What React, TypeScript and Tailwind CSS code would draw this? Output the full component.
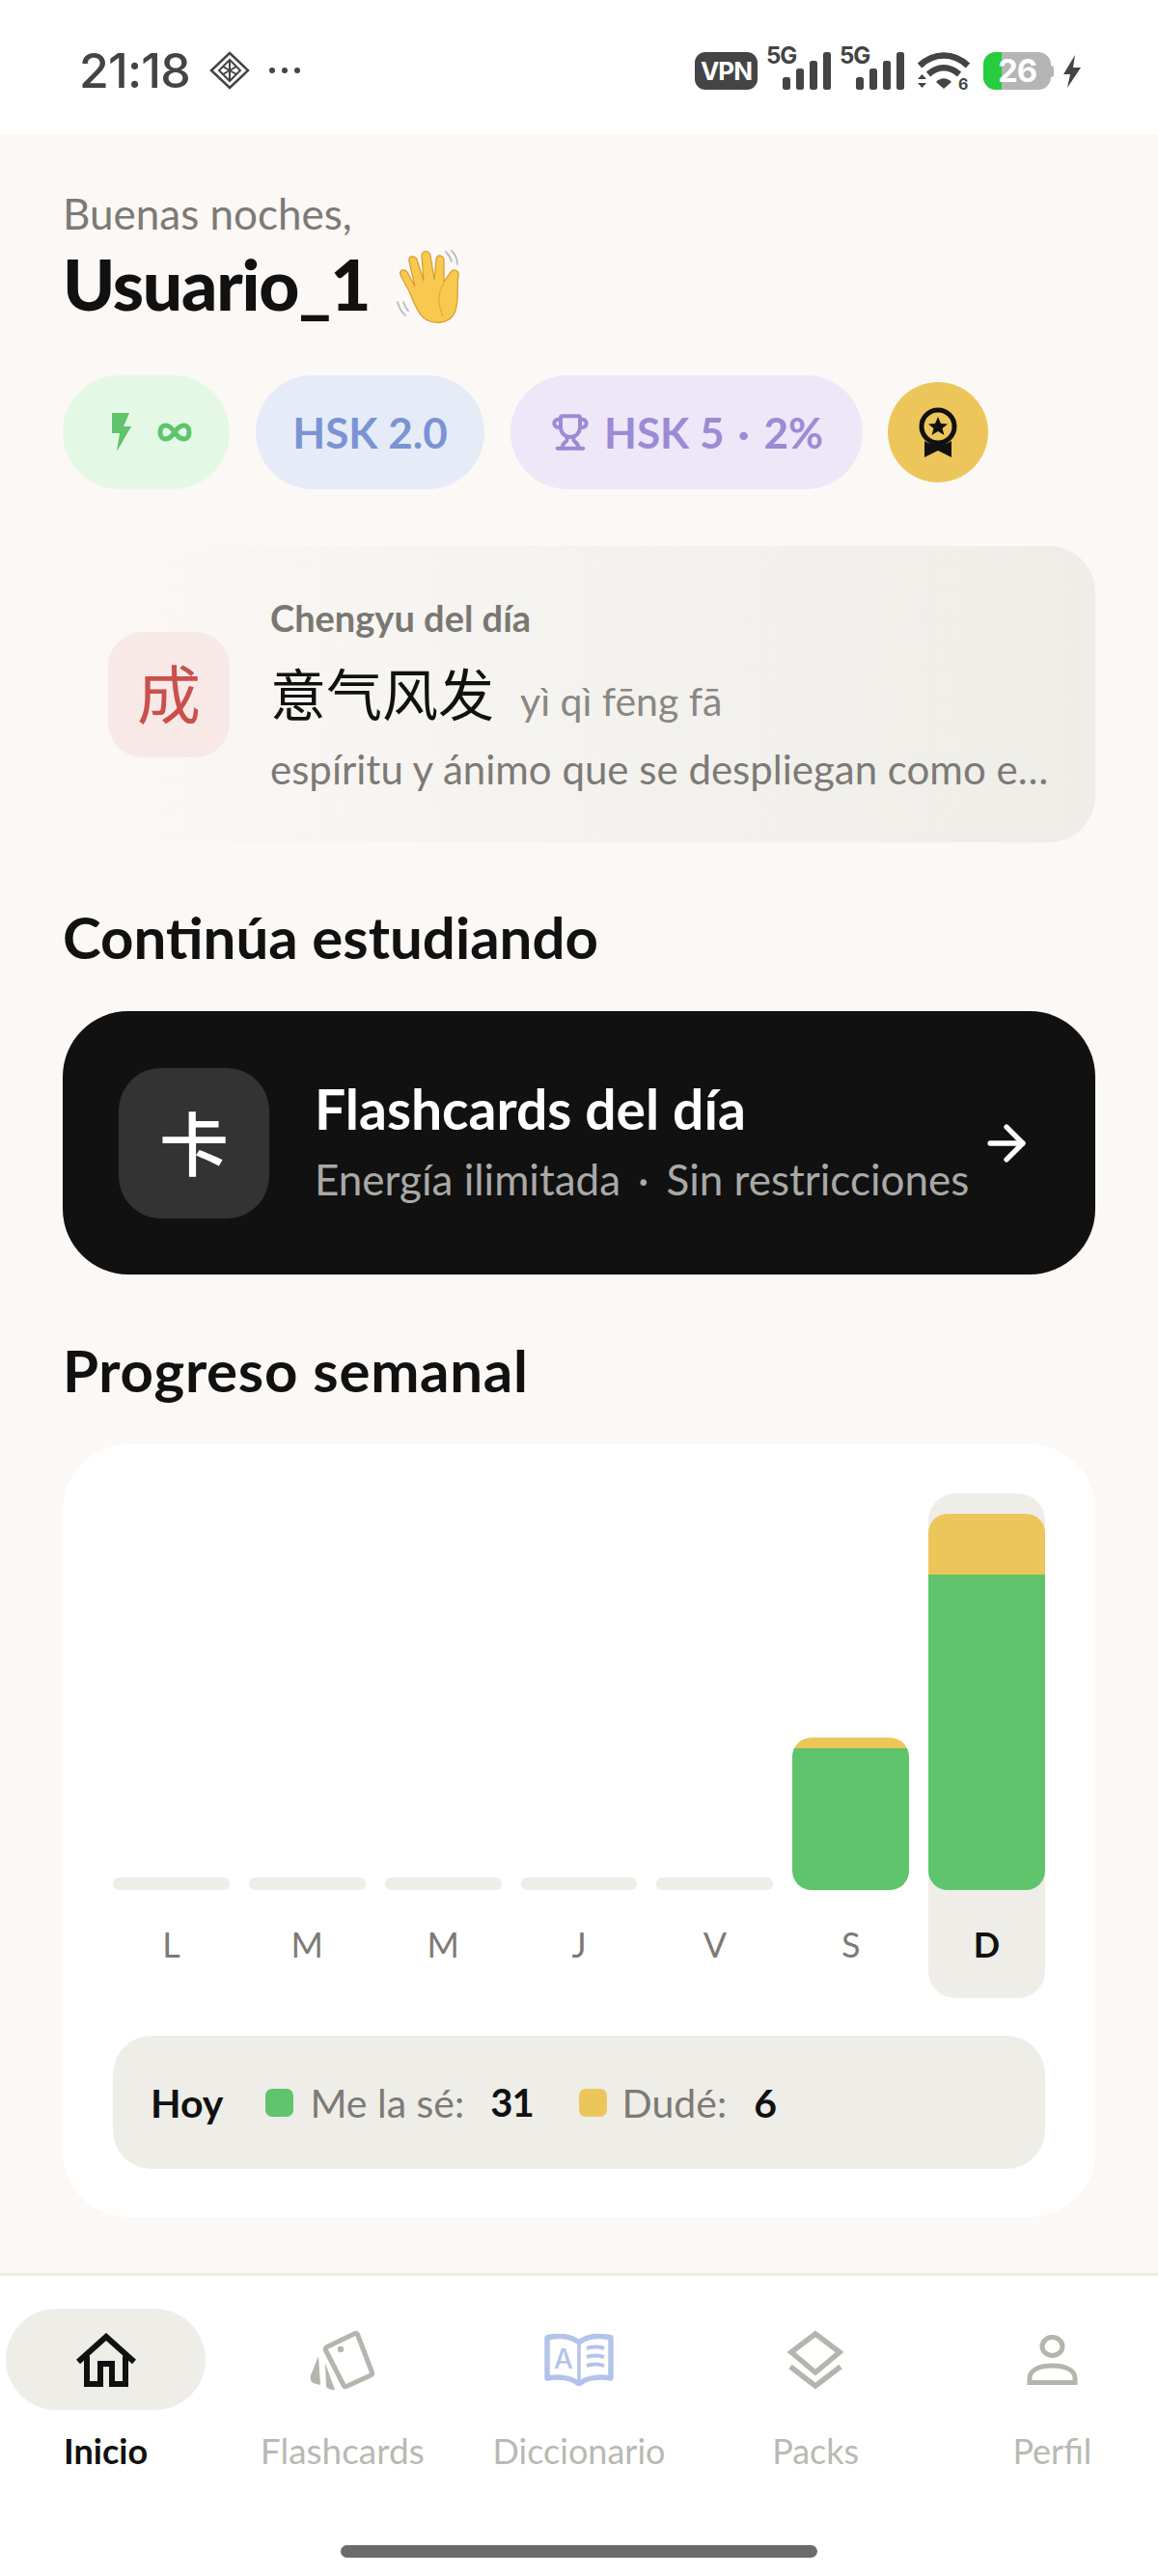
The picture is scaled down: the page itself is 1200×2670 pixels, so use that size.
import { ArrowRight, Trophy } from "lucide-react";

const sans = "font-['Lato','Noto_Sans_CJK_SC',sans-serif]";

function Signal() {
  return (
    <svg width="68" height="54" viewBox="0 -10 68 54" className="block">
      <text x="0" y="17" fontSize="24" fontWeight="700" fill="#444" fontFamily="Inter, sans-serif" letterSpacing="-1">5G</text>
      <rect x="17" y="31" width="8" height="13" rx="2.5" fill="#444" />
      <rect x="31" y="22" width="8" height="22" rx="2.5" fill="#444" />
      <rect x="45" y="14" width="8" height="30" rx="2.5" fill="#444" />
      <rect x="59" y="5" width="8" height="39" rx="2.5" fill="#444" />
    </svg>
  );
}

function StatusBar() {
  return (
    <div className="h-[140px] bg-white flex items-center justify-between pl-[82px] pr-[79px] text-[#444]">
      <div className="flex items-center pt-[6px]">
        <span className="font-['Inter',sans-serif] text-[50px] leading-none font-medium tracking-[-0.8px]">21:18</span>
        <svg width="42" height="40" viewBox="0 0 42 40" fill="none" stroke="#444" strokeWidth="2.5" className="ml-[20px]">
          <path d="M21 2 L40 20 L21 38 L2 20 Z" />
          <path d="M21 9 L32 20 L21 31 L10 20 Z" strokeWidth="2" />
          <path d="M14 16 L28 24 M28 16 L14 24 M21 9 V31" strokeWidth="2" />
        </svg>
        <div className="flex gap-[7px] ml-[20px]">
          <div className="w-[6px] h-[6px] rounded-full bg-[#444]" />
          <div className="w-[6px] h-[6px] rounded-full bg-[#444]" />
          <div className="w-[6px] h-[6px] rounded-full bg-[#444]" />
        </div>
      </div>
      <div className="flex items-end h-[44px] mt-[2px]">
        <div className="w-[65px] h-[39px] rounded-[11px] bg-[#444] text-white font-['Inter',sans-serif] font-bold text-[26px] leading-none flex items-center justify-center tracking-[-1px]">VPN</div>
        <div className="ml-[9px]"><Signal /></div>
        <div className="ml-[8px]"><Signal /></div>
        <svg width="56" height="46" viewBox="0 0 56 46" className="ml-[12px] mb-[-6px]">
          <path d="M3 15 C18 1 38 1 53 15" fill="none" stroke="#444" strokeWidth="6.5" />
          <path d="M12 24 C22 15 34 15 44 24" fill="none" stroke="#444" strokeWidth="6.5" />
          <path d="M20 32 C25 27 31 27 36 32 L28 39 Z" fill="#444" />
          <path d="M1 29 L5.5 24 L10 29 Z M1 33 H10 L5.5 38 Z" fill="#444" />
          <text x="43" y="40" fontSize="16" fontWeight="700" fill="#444" fontFamily="Inter, sans-serif">6</text>
        </svg>
        <div className="flex items-center ml-[13px]">
          <div className="relative w-[70px] h-[39px] rounded-[13px] bg-[#b5b5b5] overflow-hidden flex items-center justify-center">
            <div className="absolute left-0 top-0 bottom-0 w-[19px] bg-[#27cc3f]" />
            <span className="relative text-white font-['Inter',sans-serif] font-bold text-[33px] leading-none tracking-[-1px]">26</span>
          </div>
          <div className="w-[3px] h-[12px] rounded-r-sm bg-[#b5b5b5]" />
        </div>
        <svg width="20" height="34" viewBox="0 0 20 34" className="ml-[9px] mb-[2px]">
          <path d="M13 0 L1 20 H8 L5 34 L19 13 H11 Z" fill="#444" />
        </svg>
      </div>
    </div>
  );
}

function WaveHand() {
  return (
    <svg width="70" height="78" viewBox="0 0 70 78">
      <path d="M58 2 C62 6 64 11 64 16 M52 3 C55 6 57 9 58 13" fill="none" stroke="#b7bfc9" strokeWidth="1.8" strokeLinecap="round" />
      <path d="M2 55 C3 60 6 65 10 69 M8 55 C9 58 10 61 13 64" fill="none" stroke="#b7bfc9" strokeWidth="1.8" strokeLinecap="round" />
      <path
        d="M14 44 L5 27 C3 22 9 20 12 24 L20 39 L14 13 C13 7 20 6 22 11 L29 33 L27 7 C27 1 35 1 36 7 L40 32 L42 11 C43 5 50 6 50 12 L50 34 L57 24 C60 20 66 22 65 28 C63 38 66 52 62 64 C58 76 44 79 33 74 C24 70 19 56 14 44 Z"
        fill="#f7c94f"
        stroke="#d99a2b"
        strokeWidth="1.2"
      />
      <path d="M50 36 C44 44 43 56 49 70" fill="none" stroke="#e5a935" strokeWidth="1.2" />
    </svg>
  );
}

function Pills() {
  return (
    <div className="flex items-center mt-[53px] text-[44px] font-bold leading-none">
      <div className="w-[173px] h-[118px] rounded-full bg-[#e3f9e6] flex items-center pl-[49px]">
        <svg width="22" height="40" viewBox="0 0 22 40">
          <path d="M2 0 H20 L14 14 H22 L7 40 L10 21 H2 Z" fill="#5fc46b" />
        </svg>
        <svg width="36" height="20" viewBox="0 0 36 20" fill="none" stroke="#5fc46b" strokeWidth="5" className="ml-[27px]">
          <path d="M18 10 C14 4 11 3 8.5 3 C5 3 3 6 3 10 C3 14 5 17 8.5 17 C11 17 14 16 18 10 C22 4 25 3 27.5 3 C31 3 33 6 33 10 C33 14 31 17 27.5 17 C25 17 22 16 18 10 Z" />
        </svg>
      </div>
      <div className="ml-[27px] w-[237px] h-[118px] rounded-full bg-[#e5ecf8] text-[#7b93d4] flex items-center justify-center">HSK 2.0</div>
      <div className="ml-[27px] w-[365px] h-[118px] rounded-full bg-[#eee7f8] text-[#9b8bd4] flex items-center pl-[42px]">
        <Trophy size={40} strokeWidth={2.4} />
        <span className="ml-[15px]">HSK 5</span>
        <span className="ml-[14px]">·</span>
        <span className="ml-[15px]">2%</span>
      </div>
      <div className="ml-[26px] w-[104px] h-[104px] rounded-full bg-[#edc65b] flex items-center justify-center">
        <svg width="40" height="52" viewBox="0 0 40 52">
          <circle cx="20" cy="20" r="17" fill="none" stroke="#111" strokeWidth="5" />
          <path d="M20 10 L23 17 L30 17.5 L24.5 22 L26.5 29 L20 25 L13.5 29 L15.5 22 L10 17.5 L17 17 Z" fill="#111" />
          <path d="M6 35 C14 40 26 40 34 35 V52 L20 45 L6 52 Z" fill="#111" />
        </svg>
      </div>
    </div>
  );
}

function ChengyuCard() {
  return (
    <div className="mt-[59px] h-[307px] rounded-[48px] bg-gradient-to-r from-[#fbf8f5] to-[#eeede8] flex items-center pl-[47px]">
      <div className="w-[126px] h-[130px] rounded-[36px] bg-[#f8e9e7] text-[#c9504c] text-[66px] leading-none flex items-center justify-center">成</div>
      <div className="ml-[42px] flex flex-col mt-[3px]">
        <div className="text-[38px] leading-[44px] font-bold text-[#7a7772] mt-[-4px]">Chengyu del día</div>
        <div className="flex items-baseline mt-[22px] h-[66px]">
          <span className="text-[58px] leading-[66px] text-[#111] font-['Noto_Sans_CJK_SC',sans-serif]">意气风发</span>
          <span className="ml-[27px] text-[41px] leading-none text-[#8a8782]">yì qì fēng fā</span>
        </div>
        <div className="text-[42px] leading-[48px] mt-[23px] text-[#7d7a76] whitespace-nowrap">espíritu y ánimo que se despliegan como e…</div>
      </div>
    </div>
  );
}

function StudyCard() {
  return (
    <div className="mt-[41px] h-[273px] rounded-[68px] bg-[#111] flex items-center pl-[58px] pr-[63px]">
      <div className="w-[156px] h-[156px] rounded-[44px] bg-[#333] text-white text-[72px] font-medium leading-none flex items-center justify-center">卡</div>
      <div className="ml-[47px] flex-1 mt-[-4px]">
        <div className="text-[57px] leading-[64px] font-bold text-white">Flashcards del día</div>
        <div className="text-[44px] leading-[54px] mt-[14px] text-[#a9a9a6] flex whitespace-pre">
          <span>Energía ilimitada</span>
          <span className="mx-[18px]">·</span>
          <span>Sin restricciones</span>
        </div>
      </div>
      <ArrowRight size={58} strokeWidth={2.2} className="text-white" />
    </div>
  );
}

const days = [
  { label: "L", known: 0, doubt: 0 },
  { label: "M", known: 0, doubt: 0 },
  { label: "M", known: 0, doubt: 0 },
  { label: "J", known: 0, doubt: 0 },
  { label: "V", known: 0, doubt: 0 },
  { label: "S", known: 147, doubt: 11 },
  { label: "D", known: 327, doubt: 63, today: true },
];

function WeekChart() {
  return (
    <div className="mt-[41px] h-[801px] rounded-[68px] bg-white px-[52px] pt-[51px]">
      <div className="grid grid-cols-7 gap-x-[20px]">
        {days.map((d, i) => (
          <div key={i} className={d.today ? "rounded-[28px] bg-[#eeede8]" : ""}>
            <div className="h-[411px] flex flex-col justify-end">
              {d.known > 0 ? (
                <div className="rounded-[20px] overflow-hidden flex flex-col">
                  <div className="bg-[#edc65b]" style={{ height: d.doubt }} />
                  <div className="bg-[#5fc46b]" style={{ height: d.known }} />
                </div>
              ) : (
                <div className="h-[13px] rounded-[6px] bg-[#eeede8]" />
              )}
            </div>
            <div className={"h-[112px] flex items-center justify-center text-[36px] leading-none " + (d.today ? "font-bold text-[#111]" : "text-[#7d7a76]")}>
              {d.label}
            </div>
          </div>
        ))}
      </div>
      <div className="mt-[39px] h-[138px] rounded-[40px] bg-[#eeede8] flex items-center pl-[39px] text-[41px] leading-none">
        <span className="font-bold text-[#111]">Hoy</span>
        <div className="ml-[44px] w-[29px] h-[29px] rounded-[7px] bg-[#5fc46b]" />
        <span className="ml-[17px] text-[#7d7a76]">Me la sé:</span>
        <span className="ml-[27px] font-bold text-[#111] text-[40px] tracking-[-1px]">31</span>
        <div className="ml-[47px] w-[29px] h-[29px] rounded-[7px] bg-[#edc65b]" />
        <span className="ml-[16px] text-[#7d7a76]">Dudé:</span>
        <span className="ml-[28px] font-bold text-[#111]">6</span>
      </div>
    </div>
  );
}

function BottomNav() {
  const gray = "#b5b5ae";
  return (
    <div className="h-[314px] bg-white border-t-[3px] border-[#ecebe4] relative">
      <div className="grid grid-cols-5 gap-x-[38px] px-[6px] pt-[34px]">
        <div className="flex flex-col items-center">
          <div className="w-full h-[105px] rounded-full bg-[#eeede8] flex items-center justify-center">
            <svg width="64" height="56" viewBox="0 0 64 56" fill="none" stroke="#111" strokeWidth="6">
              <path d="M3 30 L32 4 L61 30" />
              <path d="M12 24 V53 H26 V32 H38 V53 H52 V24" />
            </svg>
          </div>
          <div className="mt-[20px] text-[36px] leading-[44px] font-bold text-[#111]">Inicio</div>
        </div>
        <div className="flex flex-col items-center">
          <div className="h-[105px] flex items-center justify-center">
            <svg width="68" height="62" viewBox="0 0 68 62" fill="none">
              <path d="M18 17.5 L47 3.5 C48 3 49 3.5 49.5 4.5 L64.5 44 C65 45.5 64.5 46.5 63 47 L38 58.5 C36.5 59 35.5 58.5 35 57 L16.5 21 C16 19.5 16.5 18.5 18 17.5 Z" stroke={gray} strokeWidth="5" />
              <circle cx="32" cy="20" r="3.2" fill={gray} />
              <path d="M9 27 L1 47 C0 50 1 53 3 55 L11 57 L9 27 Z" fill={gray} />
              <path d="M16 34 L17 58 C17 60 20 62 26 62 Z" fill={gray} />
            </svg>
          </div>
          <div className="mt-[20px] text-[37px] leading-[44px] text-[#b9b9b4]">Flashcards</div>
        </div>
        <div className="flex flex-col items-center">
          <div className="h-[105px] flex items-center justify-center">
            <svg width="72" height="54" viewBox="0 0 72 54" fill="none" stroke="#b3c3ea">
              <path d="M3 4 C14 1 28 2 36 9 C44 2 58 1 69 4 V46 C58 44 44 45 36 52 C28 45 14 44 3 46 Z" strokeWidth="5.5" strokeLinejoin="round" />
              <path d="M36 9 V50" strokeWidth="3.5" />
              <text x="10" y="36" fontSize="28" fontWeight="500" fill="#b3c3ea" stroke="none" fontFamily="Inter, sans-serif">A</text>
              <path d="M44 15 C50 13 56 13 62 15 M44 24 C50 22 56 22 62 24 M44 33 C50 31 56 31 62 33" strokeWidth="4" />
            </svg>
          </div>
          <div className="mt-[20px] text-[36px] leading-[44px] text-[#b9b9b4]">Diccionario</div>
        </div>
        <div className="flex flex-col items-center">
          <div className="h-[105px] flex items-center justify-center">
            <svg width="58" height="62" viewBox="0 0 58 62" fill="none" stroke={gray} strokeWidth="5.5">
              <path d="M29 4 L54 23 L29 44 L4 23 Z" />
              <path d="M3 38 L29 58 L55 38" />
            </svg>
          </div>
          <div className="mt-[20px] text-[36px] leading-[44px] text-[#b9b9b4]">Packs</div>
        </div>
        <div className="flex flex-col items-center">
          <div className="h-[105px] flex items-center justify-center">
            <svg width="53" height="52" viewBox="0 0 53 52" fill="none" stroke={gray} strokeWidth="5">
              <ellipse cx="26.5" cy="12" rx="10.5" ry="9.5" />
              <path d="M3 49.5 V45 C3 36 14 32 26.5 32 C39 32 50 36 50 45 V49.5 Z" />
            </svg>
          </div>
          <div className="mt-[20px] text-[36px] leading-[44px] text-[#b9b9b4]">Perfil</div>
        </div>
      </div>
      <div className="absolute left-[353px] top-[279px] w-[494px] h-[13px] rounded-full bg-[#6b6b6b]" />
    </div>
  );
}

export default function App() {
  return (
    <div className={"w-[1200px] h-[2670px] flex flex-col overflow-hidden bg-[#fbf8f5] " + sans}>
      <StatusBar />
      <main className="flex-1 px-[65px] pt-[56px]">
        <div className="text-[44px] leading-[50px] text-[#7d7a76]">Buenas noches,</div>
        <div className="flex items-center mt-[8px] h-[80px]">
          <span className="text-[73px] leading-[80px] font-black tracking-[-1.2px] text-[#111]">Usuario_1</span>
          <span className="ml-[27px] mt-[6px]"><WaveHand /></span>
        </div>
        <div className="h-[2px]" />
        <Pills />
        <ChengyuCard />
        <h2 className="mt-[62px] text-[60px] leading-[72px] font-bold text-[#111]">Continúa estudiando</h2>
        <StudyCard />
        <h2 className="mt-[63px] text-[60px] leading-[72px] font-bold text-[#111] tracking-[0.7px]">Progreso semanal</h2>
        <WeekChart />
      </main>
      <BottomNav />
    </div>
  );
}
